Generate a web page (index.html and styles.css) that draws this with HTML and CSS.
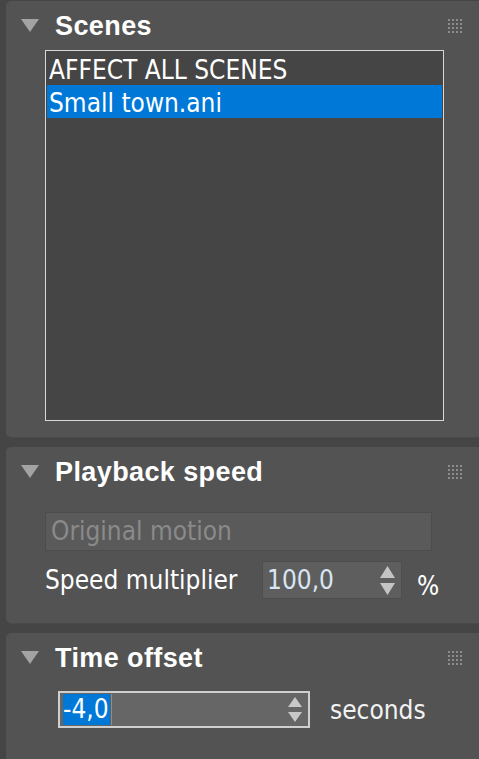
FILE: index.html
```html
<!DOCTYPE html>
<html>
<head>
<meta charset="utf-8">
<link rel="stylesheet" href="styles.css">
</head>
<body>
<div class="page">
  <section class="panel panel-scenes">
    <header class="panel-head">
      <svg class="caret" width="18" height="13" viewBox="0 0 18 13"><polygon points="0,0 18,0 9,13" fill="#a3a3a3"/></svg>
      <h2 class="title">Scenes</h2>
      <svg class="grip" width="14" height="14" viewBox="0 0 14 14"><path d="M0 1H14M0 5H14M0 9H14M0 13H14" stroke="#8c8c8c" stroke-width="2" stroke-dasharray="2 2"/></svg>
    </header>
    <div class="list">
      <div class="list-row">AFFECT ALL SCENES</div>
      <div class="list-row selected">Small town.ani</div>
    </div>
  </section>

  <section class="panel panel-speed">
    <header class="panel-head">
      <svg class="caret" width="18" height="13" viewBox="0 0 18 13"><polygon points="0,0 18,0 9,13" fill="#a3a3a3"/></svg>
      <h2 class="title">Playback speed</h2>
      <svg class="grip" width="14" height="14" viewBox="0 0 14 14"><path d="M0 1H14M0 5H14M0 9H14M0 13H14" stroke="#8c8c8c" stroke-width="2" stroke-dasharray="2 2"/></svg>
    </header>
    <div class="speed-body">
      <div class="btn-disabled">Original motion</div>
      <div class="field-row">
        <span class="label">Speed multiplier</span>
        <div class="spinner">
          <span class="spin-value">100,0</span>
          <svg class="spin-arrows" width="15" height="29" viewBox="0 0 15 29"><polygon points="7.5,0 15,12 0,12" fill="#c4c4c4"/><polygon points="0,17 15,17 7.5,29" fill="#c4c4c4"/></svg>
        </div>
        <span class="unit-pct">%</span>
      </div>
    </div>
  </section>

  <section class="panel panel-time">
    <header class="panel-head">
      <svg class="caret" width="18" height="13" viewBox="0 0 18 13"><polygon points="0,0 18,0 9,13" fill="#a3a3a3"/></svg>
      <h2 class="title">Time offset</h2>
      <svg class="grip" width="14" height="14" viewBox="0 0 14 14"><path d="M0 1H14M0 5H14M0 9H14M0 13H14" stroke="#8c8c8c" stroke-width="2" stroke-dasharray="2 2"/></svg>
    </header>
    <div class="time-body">
      <div class="input-active">
        <span class="sel-text">-4,0</span><span class="text-caret"></span>
        <svg class="spin-arrows small" width="14" height="26" viewBox="0 0 14 26"><polygon points="7,0 14,10 0,10" fill="#c8c8c8"/><polygon points="0,15 14,15 7,25" fill="#c8c8c8"/></svg>
      </div>
      <span class="unit-sec">seconds</span>
    </div>
  </section>
</div>
</body>
</html>
```

FILE: styles.css
```css
html, body {
  margin: 0;
  padding: 0;
  background: #454545;
  overflow: hidden;
}
body {
  width: 479px;
  height: 759px;
  font-family: "DejaVu Sans Condensed", "DejaVu Sans", sans-serif;
  font-stretch: condensed;
  font-size: 26px;
  color: #ffffff;
}
.page {
  display: flex;
  flex-direction: column;
  gap: 10px;
  padding: 1px 0 0 6px;
}
.panel {
  width: 490px;
  background: #535353;
  border-radius: 5px 0 0 5px;
  box-shadow: 0 1px 0 #4a4a4a;
}
.panel-scenes { height: 436px; }
.panel-speed { height: 176px; }
.panel-time { height: 140px; }

.panel-head {
  height: 48px;
  display: flex;
  align-items: center;
  padding: 0 34px 0 15px;
}
.caret { flex: none; margin-top: 0; }
.title {
  margin: 0 0 0 16px;
  padding-top: 3px;
  font-family: "Liberation Sans", Arial, sans-serif;
  font-weight: bold;
  font-size: 27px;
  letter-spacing: 0.4px;
  color: #ffffff;
  flex: 1;
}
.grip { flex: none; margin-top: 2px; }

.list {
  margin: 1px 0 0 39px;
  width: 399px;
  height: 371px;
  box-sizing: border-box;
  border: 1px solid #d8d8d8;
  background: #454545;
  padding: 1px;
}
.list-row {
  height: 30px;
  line-height: 30px;
  padding: 3px 0 0 2px;
  white-space: nowrap;
}
.list-row.selected { background: #0078d7; }

.speed-body {
  padding: 17px 0 0 39px;
  display: flex;
  flex-direction: column;
  gap: 10px;
}
.btn-disabled {
  width: 387px;
  height: 39px;
  box-sizing: border-box;
  background: #5a5a5a;
  border: 1px solid #4c4c4c;
  color: #8a8a8a;
  line-height: 37px;
  padding-left: 5px;
}
.field-row {
  display: flex;
  align-items: center;
  height: 38px;
}
.label {
  width: 217px;
  flex: none;
  color: #ffffff;
}
.spinner {
  width: 140px;
  height: 38px;
  box-sizing: border-box;
  background: #5e5e5e;
  border: 1px solid #4e4e4e;
  display: flex;
  align-items: center;
  padding: 0 6px 0 4px;
}
.spin-value {
  flex: 1;
  color: #d8e6f4;
}
.unit-pct {
  margin-left: 15px;
  padding-top: 12px;
}

.time-body {
  padding: 10px 0 0 52px;
  display: flex;
  align-items: center;
}
.input-active {
  width: 252px;
  height: 37px;
  box-sizing: border-box;
  border: 2px solid #cfcfcf;
  background: #666666;
  display: flex;
  align-items: center;
  padding: 0 6px 0 3px;
}
.sel-text {
  background: #0078d7;
  height: 31px;
  line-height: 31px;
  padding: 0 2px 0 0;
  color: #ffffff;
}
.text-caret {
  width: 1px;
  height: 31px;
  background: #e07a20;
  margin-right: auto;
}
.unit-sec {
  margin-left: 20px;
  color: #f2f2f2;
}
```
